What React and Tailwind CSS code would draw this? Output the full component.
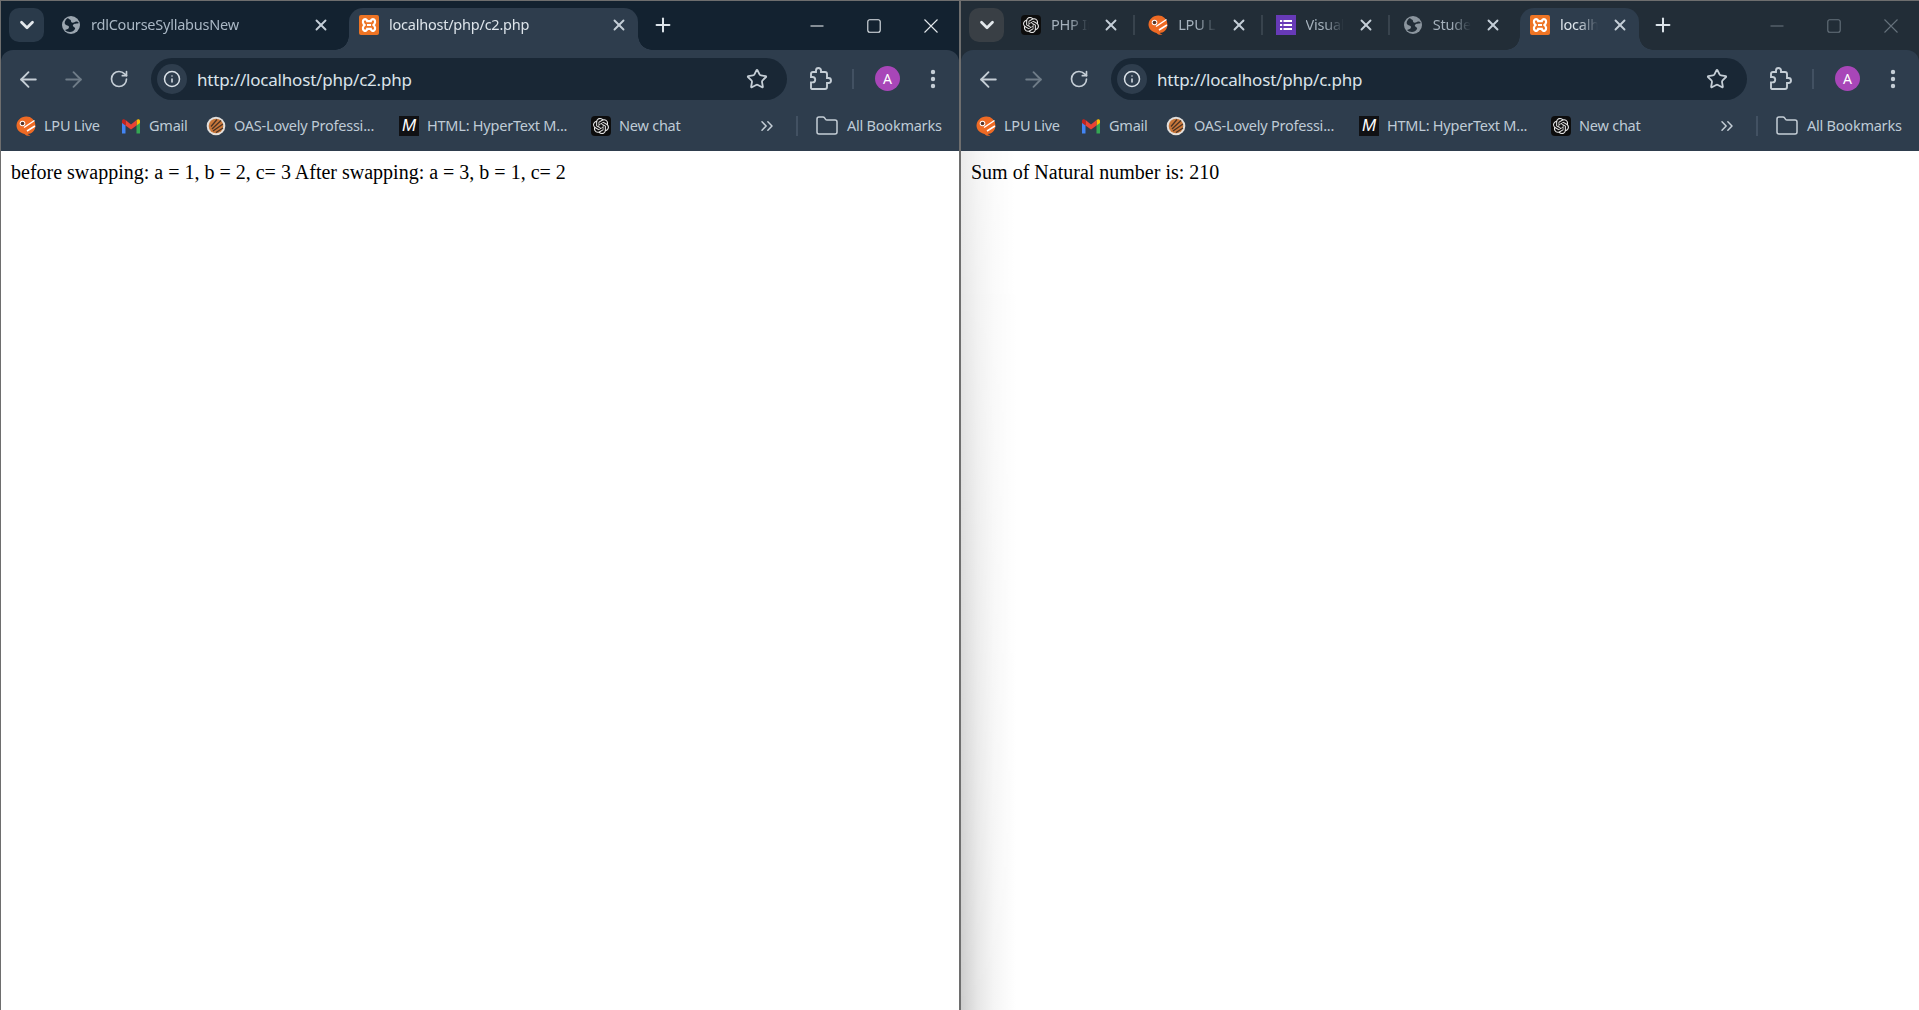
import React from "react";
import { ArrowLeft, ArrowRight, RotateCw, Info, Star, X, Plus, ChevronDown, ChevronsRight, Folder } from "lucide-react";
import { SiOpenai } from "react-icons/si";

const UI = { fontFamily: '"Noto Sans", "Open Sans", sans-serif' };

function Globe({ dim }) {
  return (
    <svg width="20" height="20" viewBox="0 0 20 20" className="shrink-0">
      <circle cx="10" cy="10" r="9" fill={dim ? "#8b959e" : "#9ba6b0"} />
      <path d="M4 15c2-1 4-1 4-3 0-2-3-1-4-3C3 7 5 4 7 3c1 2 3 1 3 3s2 2 4 1 3 0 4 1c-2 1-5 0-6 2s3 2 2 4-3 3-5 3-4-1-5-2z" fill={dim ? "#222d37" : "#132230"} />
    </svg>
  );
}

function Xampp() {
  return (
    <svg width="20" height="20" viewBox="0 0 20 20" className="shrink-0">
      <rect width="20" height="20" rx="2" fill="#ee7424" />
      <path d="M5 4.500c1.600-1 3 .4 3.200 1.700h3.600C12 4.900 13.400 3.500 15 4.500c1.800 1.100 1.300 3.800-.6 5.500 1.900 1.700 2.400 4.400.6 5.500-1.600 1-3-.4-3.200-1.700H8.200C8 15.100 6.600 16.500 5 15.500c-1.800-1.100-1.300-3.800.6-5.500C3.700 8.300 3.200 5.600 5 4.500z" fill="none" stroke="#fff" strokeWidth="2.200" />
      <path d="M8 9h4v2H8z" fill="#fff" />
    </svg>
  );
}

function Lpu() {
  return (
    <svg width="20" height="20" viewBox="0 0 20 20" className="shrink-0">
      <path d="M10 0.500a9 9 0 0 1 9.500 9c0 5-4 8.500-8 8.500l3 1.800c-3 .2-5-.6-6-1.900C4 17 .500 14 .500 9.500 .500 4.500 5 .500 10 .500z" fill="#ee6a24" />
      <path d="M8 11.500 18.500 4.500M11 15 19 10" stroke="#fff" strokeWidth="1.500" fill="none" />
      <circle cx="6.500" cy="7.500" r="2.800" fill="#fff" />
      <circle cx="6.500" cy="7.500" r="1.800" fill="#5a3426" />
    </svg>
  );
}

function Gmail() {
  return (
    <svg width="20" height="20" viewBox="0 0 20 20" className="shrink-0">
      <path d="M1 6v11.500h3.500V9z" fill="#4285f4" />
      <path d="M15.500 9v8.500H19V6z" fill="#34a853" />
      <path d="M15.500 4v5.500L19 7V5c0-2-2-2.500-3.500-1z" fill="#fbbc04" />
      <path d="M4.500 4 10 8.500 15.500 4v5.500L10 13.500 4.500 9.500z" fill="#ea4335" />
      <path d="M1 5c0-2 2-2.500 3.500-1v5.500L1 7z" fill="#c5221f" />
    </svg>
  );
}

function Oas() {
  return (
    <svg width="20" height="20" viewBox="0 0 20 20" className="shrink-0">
      <circle cx="10" cy="10" r="9.300" fill="#e3dfdb" />
      <circle cx="10" cy="10" r="7.300" fill="#c9773a" />
      <path d="M6 13 15 4.500M7 15 17 8M10 16.500 17 12M5 10.500 11 3.500" stroke="#4b3324" strokeWidth="1.300" fill="none" />
    </svg>
  );
}

function MdnIcon() {
  return (
    <div className="w-5 h-5 shrink-0 bg-[#101114] flex items-center justify-center text-white italic font-normal text-[17px] tracking-normal leading-none overflow-hidden" style={{ fontFamily: '"Liberation Sans", sans-serif' }}>
      M
    </div>
  );
}

function Gpt() {
  return (
    <div className="w-5 h-5 shrink-0 rounded-[4px] bg-[#0d0d0d] flex items-center justify-center">
      <SiOpenai size={16} color="#e8e8e8" />
    </div>
  );
}

function Forms() {
  return (
    <svg width="20" height="20" viewBox="0 0 20 20" className="shrink-0">
      <rect width="20" height="20" fill="#673ab7" />
      <path d="M4 5h2.200v2H4zM4 9h2.200v2H4zM4 13h2.200v2H4zM7.500 5H16v2H7.500zM7.500 9H16v2H7.500zM7.500 13H16v2H7.500z" fill="#fff" />
    </svg>
  );
}

function Tab({ icon, title, active, width, dim }) {
  return (
    <div
      className={`relative h-[42px] flex items-center shrink-0 pl-[10px] pr-[10px] pb-[8px] rounded-t-[14px] text-[14.500px] tracking-[-0.230px] ${active ? "bg-[#2e3d4d] text-[#dde4ea]" : dim ? "text-[#a5b1bc]" : "text-[#a9b7c4]"}`}
      style={{ width }}
    >
      {active && (
        <>
          <div className="absolute bottom-0 left-[-14px] w-[14px] h-[14px] bg-[radial-gradient(circle_at_0_0,transparent_13.500px,#2e3d4d_14px)]" />
          <div className="absolute bottom-0 right-[-14px] w-[14px] h-[14px] bg-[radial-gradient(circle_at_100%_0,transparent_13.500px,#2e3d4d_14px)]" />
        </>
      )}
      {icon}
      <div className="relative ml-[10px] mr-[13px] flex-1 min-w-0 overflow-hidden whitespace-nowrap [mask-image:linear-gradient(to_left,transparent_0,black_20px)]">{title}</div>
      <X size={18} strokeWidth={2.500} className="shrink-0 text-[#c4ced7]" />
    </div>
  );
}

function Sep() {
  return (
    <div className="w-[8px] shrink-0 flex justify-center h-[42px] pb-[15px] pt-[7px]">
      <div className="w-[2px] h-[20px] bg-[#38434d]" />
    </div>
  );
}

function WinControls({ dim }) {
  const c = dim ? "#66727c" : "#e3e8ec";
  return (
    <div className="ml-auto flex self-start h-[49px]" >
      <div className="w-[57px] flex items-center justify-center">
        <svg width="14" height="14" viewBox="0 0 14 14"><path d="M0.500 7h13" stroke={c} strokeWidth="1.100" /></svg>
      </div>
      <div className="w-[57px] flex items-center justify-center">
        <svg width="14" height="14" viewBox="0 0 14 14"><rect x="0.800" y="0.800" width="12.400" height="12.400" rx="2" fill="none" stroke={c} strokeWidth="1.100" /></svg>
      </div>
      <div className="w-[57px] flex items-center justify-center">
        <svg width="14" height="14" viewBox="0 0 14 14"><path d="M0.500 0.500 13.500 13.500M13.500 0.500 0.500 13.500" stroke={c} strokeWidth="1.100" /></svg>
      </div>
    </div>
  );
}

function Bookmark({ icon, label, width }) {
  return (
    <div className="flex items-center gap-[8px] shrink-0" style={{ width }}>
      {icon}
      <span className="whitespace-nowrap">{label}</span>
    </div>
  );
}

function Toolbar({ url }) {
  return (
    <div className="bg-[#2e3d4d] rounded-t-[12px] h-[101px] flex flex-col">
      <div className="h-[58px] flex items-end pl-[5px] pb-[8px] shrink-0 text-[#c5ced6]">
        <div className="w-[45px] h-[42px] flex items-center justify-center"><ArrowLeft size={25} strokeWidth={1.800} /></div>
        <div className="w-[45px] h-[42px] flex items-center justify-center text-[#6f7c88]"><ArrowRight size={25} strokeWidth={1.800} /></div>
        <div className="w-[45px] h-[42px] flex items-center justify-center"><RotateCw size={20} strokeWidth={2} /></div>
        <div className="ml-[10px] w-[636px] h-[42px] rounded-[21px] bg-[#192735] flex items-center pl-[6px] pr-[19px]">
          <div className="w-[30px] h-[30px] rounded-full bg-[#2e3d4d] flex items-center justify-center text-[#dbe2e8]"><Info size={18} strokeWidth={2} /></div>
          <div className="ml-[10px] pt-[1px] text-[17px] tracking-[-0.200px] text-[#dbe3ea] whitespace-nowrap">{url}</div>
          <Star size={22} strokeWidth={2} className="ml-auto text-[#c5ced6]" />
        </div>
        <div className="ml-[19px] w-[30px] h-[42px] flex items-center justify-center">
          <svg width="24" height="24" viewBox="0 0 24 24" fill="none" stroke="#c5ced6" strokeWidth="1.900">
            <path d="M19.500 11H18V7c0-1.100-.9-2-2-2h-4V3.500C12 2.120 10.880 1 9.500 1S7 2.120 7 3.500V5H4c-1.100 0-2 .9-2 2v3h1.500c1.500 0 2.700 1.200 2.700 2.700S5 15.400 3.500 15.400H2V21c0 1.100.9 1 2 1h12c1.100 0 2-.9 2-2v-4h1.500c1.380 0 2.500-1.120 2.500-2.500S20.880 11 19.500 11z" />
          </svg>
        </div>
        <div className="ml-[16px] w-[2px] h-[20px] bg-[#425162] mb-[11px]" />
        <div className="ml-[21px] w-[25px] h-[25px] rounded-full bg-[#a846b8] text-white text-[14px] flex items-center justify-center mb-[9px]">A</div>
        <div className="ml-[21px] w-[24px] h-[42px] flex items-center justify-center">
          <svg width="6" height="20" viewBox="0 0 6 20" fill="#c5ced6"><circle cx="3" cy="3" r="2.200" /><circle cx="3" cy="10" r="2.200" /><circle cx="3" cy="17" r="2.200" /></svg>
        </div>
      </div>
      <div className="h-[43px] flex items-center pl-[15px] pb-[8px] text-[14.500px] tracking-[-0.230px] text-[#bfcbd6]">
        <Bookmark width={105} icon={<Lpu />} label="LPU Live" />
        <Bookmark width={85} icon={<Gmail />} label="Gmail" />
        <Bookmark width={193} icon={<Oas />} label="OAS-Lovely Professi..." />
        <Bookmark width={192} icon={<MdnIcon />} label="HTML: HyperText M..." />
        <Bookmark width={160} icon={<Gpt />} label="New chat" />
        <ChevronsRight size={20} strokeWidth={1.800} className="ml-[6px] text-[#c5ced6]" />
        <div className="ml-[19px] w-[2px] h-[20px] bg-[#425162]" />
        <Folder size={24} strokeWidth={1.500} className="ml-[17px] text-[#c5ced6]" />
        <span className="ml-[8px] whitespace-nowrap">All Bookmarks</span>
      </div>
    </div>
  );
}

function Chevron({ bg }) {
  return (
    <div className={`w-[35px] h-[34px] mb-[8px] rounded-[10px] flex items-center justify-center shrink-0 text-[#e3e8ec] ${bg}`}>
      <ChevronDown size={22} strokeWidth={3} />
    </div>
  );
}

export default function App() {
  return (
    <div className="w-[1919px] h-[1010px] flex overflow-hidden bg-white" style={UI}>
      {/* left window */}
      <div className="w-[960px] shrink-0 flex flex-col border-l border-r border-t border-[#6e6e6e] bg-[#132230]">
        <div className="h-[49px] shrink-0 flex items-end pl-[8px]">
          <Chevron bg="bg-[#2a3a4a]" />
          <div className="ml-[7px] flex items-end gap-[9px]">
            <Tab width="289px" icon={<Globe />} title="rdlCourseSyllabusNew" />
            <Tab width="289px" active icon={<Xampp />} title="localhost/php/c2.php" />
          </div>
          <div className="ml-[10px] w-[30px] h-[34px] mb-[8px] flex items-center justify-center text-[#dde4ea]"><Plus size={22} strokeWidth={2.200} /></div>
          <WinControls />
        </div>
        <Toolbar url="http://localhost/php/c2.php" />
        <div className="flex-1 bg-white pl-[10px] pt-[10px] text-[20px] leading-[23px] text-black" style={{ fontFamily: '"Liberation Serif", serif' }}>
          before swapping: a = 1, b = 2, c= 3 After swapping: a = 3, b = 1, c= 2
        </div>
      </div>
      {/* right window */}
      <div className="w-[959px] shrink-0 flex flex-col border-l border-t border-[#6e6e6e] bg-[#222d37]">
        <div className="h-[49px] shrink-0 flex items-end pl-[8px]">
          <Chevron bg="bg-[#393f45]" />
          <div className="ml-[7px] flex items-end">
            <Tab dim width="119.250px" icon={<Gpt />} title="PHP Introduction" />
            <Sep />
            <Tab dim width="119.250px" icon={<Lpu />} title="LPU Live" />
            <Sep />
            <Tab dim width="119.250px" icon={<Forms />} title="Visual Programming" />
            <Sep />
            <Tab dim width="119.250px" icon={<Globe dim />} title="Student" />
            <div className="w-[8px] shrink-0" />
            <Tab active width="119.250px" icon={<Xampp />} title="localhost/php/c.php" />
          </div>
          <div className="ml-[9px] w-[30px] h-[34px] mb-[8px] flex items-center justify-center text-[#dde4ea]"><Plus size={22} strokeWidth={2.200} /></div>
          <WinControls dim />
        </div>
        <Toolbar url="http://localhost/php/c.php" />
        <div className="relative flex-1 bg-white pl-[10px] pt-[10px] text-[20px] leading-[23px] text-black" style={{ fontFamily: '"Liberation Serif", serif' }}>
          <div className="absolute left-0 top-0 bottom-0 w-[55px] bg-[linear-gradient(to_right,#cdcdcd,#e6e6e6_30%,#f5f5f5_60%,#ffffff)] [mask-image:linear-gradient(to_bottom,rgba(0,0,0,0.4),rgba(0,0,0,1))]" />
          <span className="relative">Sum of Natural number is: 210</span>
        </div>
      </div>
    </div>
  );
}
